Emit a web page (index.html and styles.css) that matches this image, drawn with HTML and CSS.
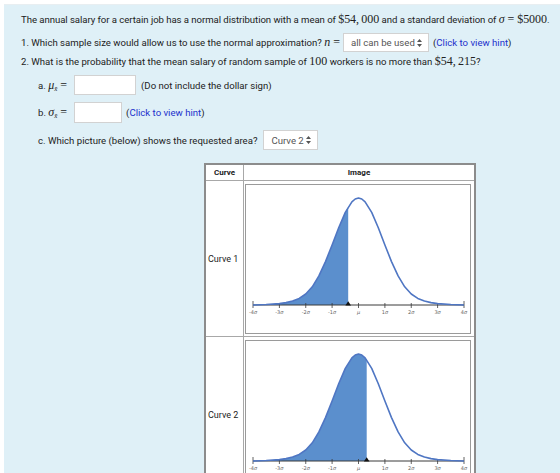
FILE: index.html
```html
<!DOCTYPE html>
<html lang="en">
<head>
  <meta charset="UTF-8">
  <meta name="viewport" content="width=device-width, initial-scale=1.0">
  <title>Sampling Distribution of the Mean</title>
  <link rel="stylesheet" href="styles.css">
</head>
<body>
  <div class="panel">
    <div class="line intro">
      The annual salary for a certain job has a normal distribution with a mean of&nbsp;<span class="m">$54,&#8201;000</span>&nbsp;and a standard deviation of&nbsp;<span class="m"><i>σ</i> = $5000</span>.
    </div>

    <div class="line q1">
      1. Which sample size would allow us to use the normal approximation?&nbsp;<span class="m"><i>n</i> =</span>
      <span class="pick pick-n">all can be used
        <svg class="arrows" width="5" height="8" viewBox="0 0 5 8"><path d="M2.5 0L5 3H0Z M2.5 8L5 5H0Z"/></svg>
      </span>
      <span class="hint">(<a href="#">Click to view hint</a>)</span>
    </div>

    <div class="line q2">
      2. What is the probability that the mean salary of random sample of&nbsp;<span class="m">100</span>&nbsp;workers is no more than&nbsp;<span class="m">$54,&#8201;215</span>?
    </div>

    <div class="line sub sub-a">
      a.&nbsp;<span class="m sym"><i>μ</i><sub><i>x̄</i></sub> =</span>
      <span class="field field-wide"></span>
      <span class="note">(Do not include the dollar sign)</span>
    </div>

    <div class="line sub sub-b">
      b.&nbsp;<span class="m sym"><i>σ</i><sub><i>x̄</i></sub> =</span>
      <span class="field"></span>
      <span class="hint">(<a href="#">Click to view hint</a>)</span>
    </div>

    <div class="line sub sub-c">
      c. Which picture (below) shows the requested area?
      <span class="pick pick-curve">Curve 2
        <svg class="arrows" width="5" height="8" viewBox="0 0 5 8"><path d="M2.5 0L5 3H0Z M2.5 8L5 5H0Z"/></svg>
      </span>
    </div>

    <table class="curves">
      <tr>
        <th class="col-name">Curve</th>
        <th>Image</th>
      </tr>
      <tr>
        <td class="name">Curve 1</td>
        <td class="pic">
          <svg class="plot" viewBox="0 0 224 148" width="224" height="148">
            <!-- shaded: left tail up to -0.39 sigma -->
            <path class="area" d="M7,120 L20.2,119.5 L33.4,118.6 L40,117.6 L46.6,116 L53.2,113.4 L59.75,109 L66.3,101.8 L72.9,90.9 L79.5,76.6 L86.1,60 L92.7,42.7 L99.3,27.4 L102.2,22 L102.2,120 Z"/>
            <line class="axis" x1="7" y1="120" x2="218" y2="120"/>
            <path class="ticks" d="M7,116V123 M33.4,118V123 M59.75,118V123 M86.1,118V123 M112.5,118V123 M138.9,118V123 M165.25,118V123 M191.6,118V123 M218,116V123"/>
            <path class="bell" d="M7,120 L20.2,119.5 L33.4,118.6 L40,117.6 L46.6,116 L53.2,113.4 L59.75,109 L66.3,101.8 L72.9,90.9 L79.5,76.6 L86.1,60 L92.7,42.7 L99.3,27.4 L105.9,16.8 L109.2,14 L112.5,13 L115.8,14 L119.1,16.8 L125.7,27.4 L132.3,42.7 L138.9,60 L145.5,76.6 L152.1,90.9 L158.7,101.8 L165.25,109 L171.8,113.4 L178.4,116 L185,117.6 L191.6,118.6 L204.8,119.5 L218,120"/>
            <path class="mark" d="M102.2,116.2 L99.4,120.5 L105,120.5 Z"/>
            <g class="labels">
              <text x="7" y="129">-4<tspan font-style="italic">σ</tspan></text>
              <text x="33.4" y="129">-3<tspan font-style="italic">σ</tspan></text>
              <text x="59.75" y="129">-2<tspan font-style="italic">σ</tspan></text>
              <text x="86.1" y="129">-1<tspan font-style="italic">σ</tspan></text>
              <text x="112.5" y="129" font-style="italic">μ</text>
              <text x="138.9" y="129">1<tspan font-style="italic">σ</tspan></text>
              <text x="165.25" y="129">2<tspan font-style="italic">σ</tspan></text>
              <text x="191.6" y="129">3<tspan font-style="italic">σ</tspan></text>
              <text x="218" y="129">4<tspan font-style="italic">σ</tspan></text>
            </g>
          </svg>
        </td>
      </tr>
      <tr>
        <td class="name">Curve 2</td>
        <td class="pic">
          <svg class="plot" viewBox="0 0 224 148" width="224" height="148">
            <!-- shaded: left of +0.31 sigma -->
            <path class="area" d="M7,120 L20.2,119.5 L33.4,118.6 L40,117.6 L46.6,116 L53.2,113.4 L59.75,109 L66.3,101.8 L72.9,90.9 L79.5,76.6 L86.1,60 L92.7,42.7 L99.3,27.4 L105.9,16.8 L109.2,14 L112.5,13 L115.8,14 L119.1,16.8 L120.7,18.8 L120.7,120 Z"/>
            <line class="axis" x1="7" y1="120" x2="218" y2="120"/>
            <path class="ticks" d="M7,116V123 M33.4,118V123 M59.75,118V123 M86.1,118V123 M112.5,118V123 M138.9,118V123 M165.25,118V123 M191.6,118V123 M218,116V123"/>
            <path class="bell" d="M7,120 L20.2,119.5 L33.4,118.6 L40,117.6 L46.6,116 L53.2,113.4 L59.75,109 L66.3,101.8 L72.9,90.9 L79.5,76.6 L86.1,60 L92.7,42.7 L99.3,27.4 L105.9,16.8 L109.2,14 L112.5,13 L115.8,14 L119.1,16.8 L125.7,27.4 L132.3,42.7 L138.9,60 L145.5,76.6 L152.1,90.9 L158.7,101.8 L165.25,109 L171.8,113.4 L178.4,116 L185,117.6 L191.6,118.6 L204.8,119.5 L218,120"/>
            <path class="mark" d="M120.7,116.2 L117.9,120.5 L123.5,120.5 Z"/>
            <g class="labels">
              <text x="7" y="129">-4<tspan font-style="italic">σ</tspan></text>
              <text x="33.4" y="129">-3<tspan font-style="italic">σ</tspan></text>
              <text x="59.75" y="129">-2<tspan font-style="italic">σ</tspan></text>
              <text x="86.1" y="129">-1<tspan font-style="italic">σ</tspan></text>
              <text x="112.5" y="129" font-style="italic">μ</text>
              <text x="138.9" y="129">1<tspan font-style="italic">σ</tspan></text>
              <text x="165.25" y="129">2<tspan font-style="italic">σ</tspan></text>
              <text x="191.6" y="129">3<tspan font-style="italic">σ</tspan></text>
              <text x="218" y="129">4<tspan font-style="italic">σ</tspan></text>
            </g>
          </svg>
        </td>
      </tr>
    </table>
  </div>
</body>
</html>
```

FILE: styles.css
```css
body {
  margin: 0;
  font-family: Roboto, "Noto Sans", sans-serif;
  font-size: 9.6px;
  color: #222;
}
.panel {
  margin: 4px 0 0 4px;
  padding: 7px 0 30px 17px;
  background: #dff0f7;
  border-top: 1px solid #e8eef1;
}
.line {
  display: flex;
  align-items: center;
  white-space: nowrap;
}
.intro { height: 14px; letter-spacing: -0.05px; }
.q1 { height: 19px; margin-top: 7px; }
.q2 { height: 14px; margin-top: 2px; }
.sub { padding-left: 17px; margin-top: 7px; }
.sub-a { height: 20px; }
.sub-b { height: 21px; }
.sub-c { height: 20px; }

/* inline math */
.m {
  font-family: "Liberation Serif", "DejaVu Serif", serif;
  font-size: 12px;
}
.m sub {
  font-size: 7px;
  vertical-align: -2px;
}
.sym { margin-right: 7px; }

.pick {
  display: inline-flex;
  align-items: center;
  box-sizing: border-box;
  height: 19px;
  padding: 0 6px 0 7px;
  background: #fff;
  border: 1px solid #d2d2d2;
  color: #555;
}
.pick-n { width: 86px; margin: 0 4px 0 3px; }
.pick-curve { width: 55px; margin-left: 6px; height: 20px; }
.arrows {
  fill: #555;
  margin-left: auto;
  flex-shrink: 0;
}

.field {
  display: inline-block;
  box-sizing: border-box;
  width: 48px;
  height: 100%;
  background: #fff;
  border: 1px solid #d2d2d2;
  margin-right: 4px;
}
.field-wide { width: 62px; margin-right: 5px; }

.hint a {
  color: #2230cc;
  text-decoration: none;
}

/* curve table */
.curves {
  margin: 13px 0 0 183px;
  border-collapse: collapse;
  border: 2px solid #8c8c8c;
  background: #fff;
}
.curves th {
  height: 15px;
  padding: 0;
  font-size: 8px;
  font-weight: bold;
  border: 1px solid #a8a8a8;
}
.col-name { width: 37px; }
.curves td {
  border: 1px solid #a8a8a8;
  padding: 0;
}
.name {
  padding-left: 2px !important;
  font-size: 9px;
  color: #222;
}
.pic { padding: 3px 3px 2px 1px !important; }
.plot {
  display: block;
  border: 1px solid #9a9a9a;
  background: #fff;
}
.area { fill: #5b8fcd; }
.axis { stroke: #3a3a3a; stroke-width: 1; }
.ticks { stroke: #3a3a3a; stroke-width: 0.8; fill: none; }
.bell {
  fill: none;
  stroke: #4f76c3;
  stroke-width: 1.6;
  stroke-linejoin: round;
}
.mark { fill: #111; }
.labels text {
  font-family: "DejaVu Sans", sans-serif;
  font-size: 5px;
  fill: #666;
  text-anchor: middle;
}
```
